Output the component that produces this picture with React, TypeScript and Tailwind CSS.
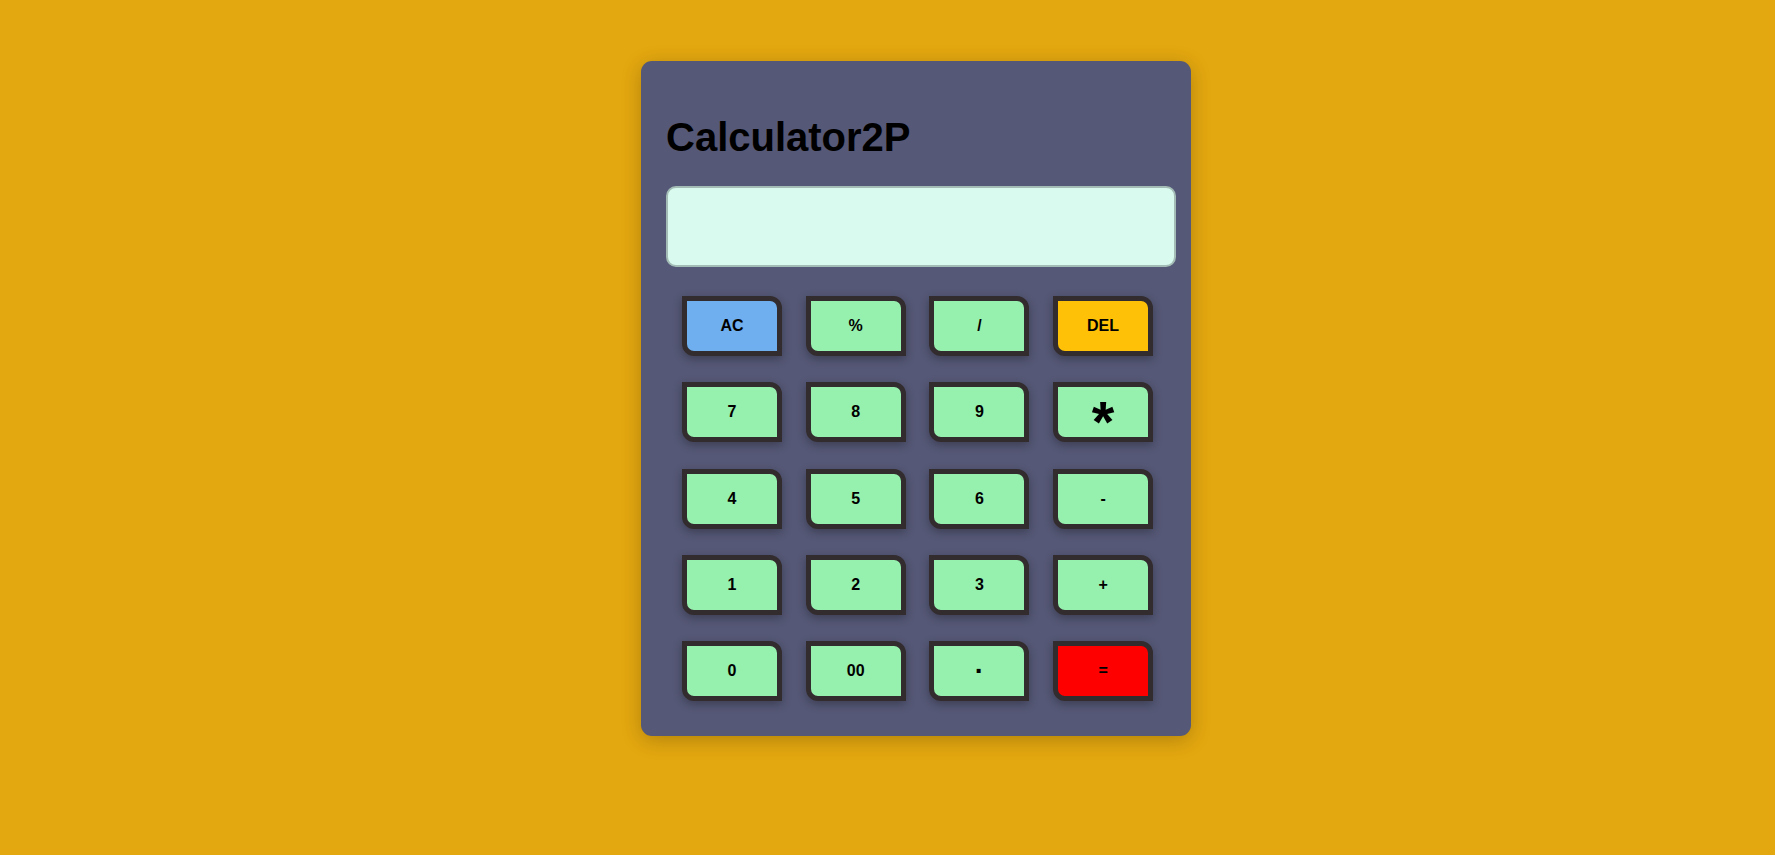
import React, { useState } from 'react';

type Key = { label: string; tone?: 'blue' | 'yellow' | 'red'; size?: 'big' | 'dot' };

const keys: Key[] = [
  { label: 'AC', tone: 'blue' },
  { label: '%' },
  { label: '/' },
  { label: 'DEL', tone: 'yellow' },
  { label: '7' },
  { label: '8' },
  { label: '9' },
  { label: '*', size: 'big' },
  { label: '4' },
  { label: '5' },
  { label: '6' },
  { label: '-' },
  { label: '1' },
  { label: '2' },
  { label: '3' },
  { label: '+' },
  { label: '0' },
  { label: '00' },
  { label: '.', size: 'dot' },
  { label: '=', tone: 'red' },
];

const toneClass = (tone?: Key['tone']) => {
  if (tone === 'blue') return 'bg-[#6fafef]';
  if (tone === 'yellow') return 'bg-[#ffc107]';
  if (tone === 'red') return 'bg-[#ff0000]';
  return 'bg-[#96f0ae]';
};

const sizeClass = (size?: Key['size']) => {
  if (size === 'big') return 'text-[58px] leading-none pt-[19px]';
  if (size === 'dot') return 'text-[28px] leading-none';
  return 'text-[16px]';
};

export default function App() {
  const [display, setDisplay] = useState('');

  const press = (label: string) => {
    if (label === 'AC') return setDisplay('');
    if (label === 'DEL') return setDisplay((d) => d.slice(0, -1));
    if (label === '=') {
      try {
        // eslint-disable-next-line no-new-func
        const result = Function(`return (${display})`)();
        setDisplay(String(result));
      } catch {
        setDisplay('Error');
      }
      return;
    }
    setDisplay((d) => d + label);
  };

  return (
    <div className="min-h-screen w-full bg-[#e3a70f] pt-[61px] font-['Liberation_Sans',Arial,sans-serif]">
      {/* Calculator body */}
      <div className="ml-[641px] w-[550px] rounded-[11px] bg-[#555876] px-[25px] pt-[53px] pb-[35px] shadow-[0_4px_20px_rgba(0,0,0,0.22)]">
        <h1 className="text-[40px] leading-[46px] font-bold text-black">Calculator2P</h1>

        <input
          value={display}
          readOnly
          className="mt-[26px] block h-[81px] w-[510px] rounded-[10px] border-2 border-[#a3bdb6] bg-[#d9faef] px-4 text-right text-[32px] text-black outline-none"
        />

        {/* Keypad */}
        <div className="mt-[29px] grid grid-cols-[repeat(4,100px)] gap-x-[23.7px] gap-y-[26.25px] pl-[16px]">
          {keys.map((k) => (
            <button
              key={k.label}
              onClick={() => press(k.label)}
              className={`flex h-[60px] w-[100px] items-center justify-center rounded-tr-[12px] rounded-bl-[12px] border-[5px] border-[#332c2e] font-bold text-black shadow-[0_3px_10px_rgba(0,0,0,0.3)] ${toneClass(k.tone)} ${sizeClass(k.size)}`}
            >
              {k.size === 'dot' ? '·' : k.label}
            </button>
          ))}
        </div>
      </div>
    </div>
  );
}
